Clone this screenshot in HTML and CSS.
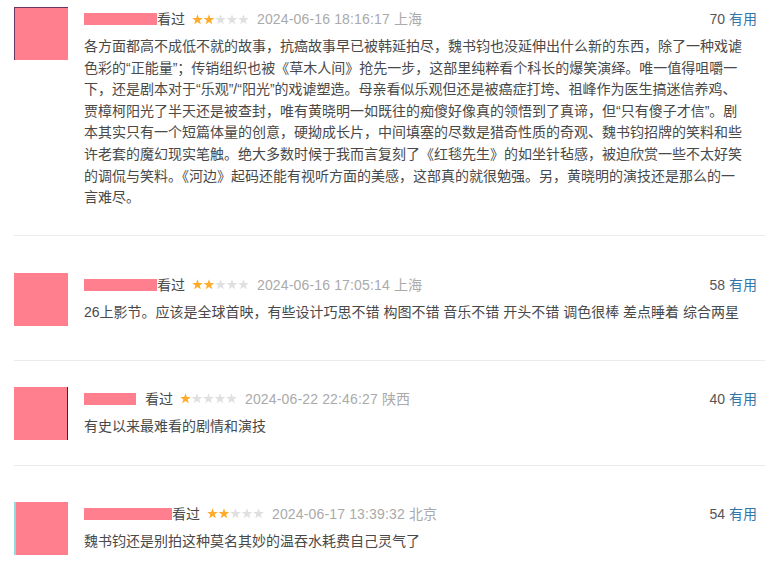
FILE: index.html
```html
<!DOCTYPE html>
<html lang="zh-CN">
<head>
<meta charset="utf-8">
<title>短评</title>
<link rel="stylesheet" href="styles.css">
</head>
<body>
<svg class="defs" width="0" height="0" aria-hidden="true">
  <defs>
    <polygon id="star" points="5.5,0.2 6.85,3.94 10.83,4.07 7.69,6.51 8.79,10.33 5.5,8.1 2.21,10.33 3.31,6.51 0.17,4.07 4.15,3.94"/>
  </defs>
</svg>
<div class="list">

  <div class="review review--first">
    <div class="avatar avatar--a"></div>
    <div class="main">
      <div class="head">
        <div class="info">
          <span class="name-mask" style="width:73px"></span><span class="watched">看过</span>
          <svg class="stars" width="57" height="11" viewBox="0 0 57 11"><use href="#star" class="on"/><use href="#star" x="11.5" class="on"/><use href="#star" x="23" class="off"/><use href="#star" x="34.5" class="off"/><use href="#star" x="46" class="off"/></svg>
          <span class="time">2024-06-16 18:16:17 上海</span>
        </div>
        <div class="votes"><span class="count">70</span> <span class="useful">有用</span></div>
      </div>
      <p class="text">各方面都高不成低不就的故事，抗癌故事早已被韩延拍尽，魏书钧也没延伸出什么新的东西，除了一种戏谑色彩的“正能量”；传销组织也被《草木人间》抢先一步，这部里纯粹看个科长的爆笑演绎。唯一值得咀嚼一下，还是剧本对于“乐观”/“阳光”的戏谑塑造。母亲看似乐观但还是被癌症打垮、祖峰作为医生搞迷信养鸡、贾樟柯阳光了半天还是被查封，唯有黄晓明一如既往的痴傻好像真的领悟到了真谛，但“只有傻子才信”。剧本其实只有一个短篇体量的创意，硬拗成长片，中间填塞的尽数是猎奇性质的奇观、魏书钧招牌的笑料和些许老套的魔幻现实笔触。绝大多数时候于我而言复刻了《红毯先生》的如坐针毡感，被迫欣赏一些不太好笑的调侃与笑料。《河边》起码还能有视听方面的美感，这部真的就很勉强。另，黄晓明的演技还是那么的一言难尽。</p>
    </div>
  </div>

  <div class="review review--loose">
    <div class="avatar"></div>
    <div class="main">
      <div class="head">
        <div class="info">
          <span class="name-mask" style="width:73px"></span><span class="watched">看过</span>
          <svg class="stars" width="57" height="11" viewBox="0 0 57 11"><use href="#star" class="on"/><use href="#star" x="11.5" class="on"/><use href="#star" x="23" class="off"/><use href="#star" x="34.5" class="off"/><use href="#star" x="46" class="off"/></svg>
          <span class="time">2024-06-16 17:05:14 上海</span>
        </div>
        <div class="votes"><span class="count">58</span> <span class="useful">有用</span></div>
      </div>
      <p class="text">26上影节。应该是全球首映，有些设计巧思不错 构图不错 音乐不错 开头不错 调色很棒 差点睡着 综合两星</p>
    </div>
  </div>

  <div class="review review--tight">
    <div class="avatar avatar--c"></div>
    <div class="main">
      <div class="head">
        <div class="info">
          <span class="name-mask name-mask--gap" style="width:52px"></span><span class="watched">看过</span>
          <svg class="stars" width="57" height="11" viewBox="0 0 57 11"><use href="#star" class="on"/><use href="#star" x="11.5" class="off"/><use href="#star" x="23" class="off"/><use href="#star" x="34.5" class="off"/><use href="#star" x="46" class="off"/></svg>
          <span class="time">2024-06-22 22:46:27 陕西</span>
        </div>
        <div class="votes"><span class="count">40</span> <span class="useful">有用</span></div>
      </div>
      <p class="text">有史以来最难看的剧情和演技</p>
    </div>
  </div>

  <div class="review review--last">
    <div class="avatar avatar--d"></div>
    <div class="main">
      <div class="head">
        <div class="info">
          <span class="name-mask" style="width:88px"></span><span class="watched">看过</span>
          <svg class="stars" width="57" height="11" viewBox="0 0 57 11"><use href="#star" class="on"/><use href="#star" x="11.5" class="on"/><use href="#star" x="23" class="off"/><use href="#star" x="34.5" class="off"/><use href="#star" x="46" class="off"/></svg>
          <span class="time">2024-06-17 13:39:32 北京</span>
        </div>
        <div class="votes"><span class="count">54</span> <span class="useful">有用</span></div>
      </div>
      <p class="text">魏书钧还是别拍这种莫名其妙的温吞水耗费自己灵气了</p>
    </div>
  </div>

</div>
</body>
</html>
```

FILE: styles.css
```css
html, body {
  margin: 0;
  padding: 0;
  background: #fff;
}

body {
  font-family: "Liberation Sans", Arial, "Noto Sans CJK SC", sans-serif;
  font-size: 14px;
  color: #494949;
  overflow: hidden;
}

.defs {
  position: absolute;
  width: 0;
  height: 0;
}

.list {
  margin-left: 14px;
  width: 751px;
  padding-top: 7px;
}

.review {
  display: flex;
  align-items: flex-start;
  padding: 37px 0 25px;
  border-bottom: 1px solid #ebebeb;
}

.review--first {
  padding-top: 0;
  padding-bottom: 26px;
}

.review--loose {
  padding-bottom: 34px;
}

.review--tight {
  padding-top: 26px;
}

.review--last {
  padding-top: 36px;
  border-bottom: none;
}

.avatar {
  flex: none;
  width: 54px;
  height: 53px;
  background: #ff7f8e;
  box-sizing: border-box;
}

.avatar--a {
  border-top: 1px solid #6a3560;
  border-left: 1px solid #6a3560;
}

.avatar--c {
  border-right: 1px solid #3a2a2a;
}

.avatar--d {
  border-left: 2px solid #8fdcdc;
}

.main {
  flex: 1;
  margin-left: 16px;
  padding-right: 8px;
  min-width: 0;
}

.head {
  display: flex;
  justify-content: space-between;
  align-items: center;
  height: 22px;
  line-height: 22px;
  margin-top: 1px;
  white-space: nowrap;
}

.info {
  display: flex;
  align-items: center;
}

.name-mask {
  display: inline-block;
  height: 12px;
  background: #ff7f8e;
}

.name-mask--gap {
  margin-right: 9px;
}

.watched {
  color: #494949;
}

.stars {
  display: block;
  margin: 0 8px 0 7px;
}

.stars .on {
  fill: #ffac2d;
}

.stars .off {
  fill: #e0e0e0;
}

.time {
  color: #aaa;
  letter-spacing: 0.15px;
}

.votes {
  color: #555;
}

.useful {
  color: #3377aa;
}

.text {
  margin: 6px 0 0;
  width: 662px;
  line-height: 21.6px;
  color: #494949;
}
```
